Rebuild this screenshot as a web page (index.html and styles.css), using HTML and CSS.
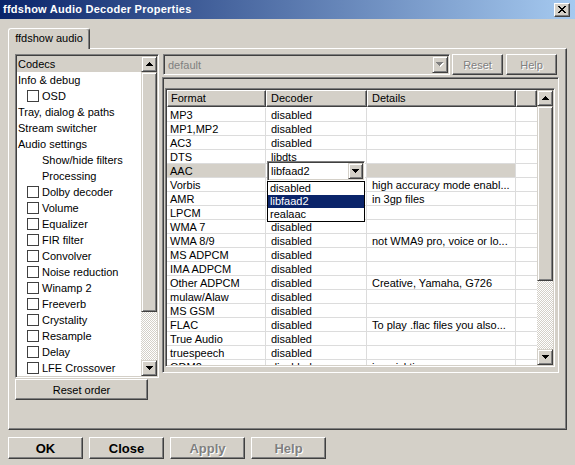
FILE: index.html
```html
<!DOCTYPE html>
<html>
<head>
<meta charset="utf-8">
<title>ffdshow Audio Decoder Properties</title>
<link rel="stylesheet" href="styles.css">
</head>
<body>
<div class="titlebar">
  <span class="title">ffdshow Audio Decoder Properties</span>
  <span class="tb-close"><svg width="8" height="7" viewBox="0 0 8 7"><path d="M0 0h2v1H0zM6 0h2v1H6zM1 1h2v1H1zM5 1h2v1H5zM2 2h4v1H2zM3 3h2v1H3zM2 4h4v1H2zM1 5h2v1H1zM5 5h2v1H5zM0 6h2v1H0zM6 6h2v1H6z" fill="#000"/></svg></span>
</div>
<div class="client">
  <div class="tabs"><div class="tab">ffdshow audio</div></div>
  <div class="panel">
    <div class="left">
      <div class="tree sunken">
        <ul class="items">
          <li class="sel">Codecs</li>
          <li>Info &amp; debug</li>
          <li class="cb"><span class="chk"></span>OSD</li>
          <li>Tray, dialog &amp; paths</li>
          <li>Stream switcher</li>
          <li>Audio settings</li>
          <li class="ind">Show/hide filters</li>
          <li class="ind">Processing</li>
          <li class="cb"><span class="chk"></span>Dolby decoder</li>
          <li class="cb"><span class="chk"></span>Volume</li>
          <li class="cb"><span class="chk"></span>Equalizer</li>
          <li class="cb"><span class="chk"></span>FIR filter</li>
          <li class="cb"><span class="chk"></span>Convolver</li>
          <li class="cb"><span class="chk"></span>Noise reduction</li>
          <li class="cb"><span class="chk"></span>Winamp 2</li>
          <li class="cb"><span class="chk"></span>Freeverb</li>
          <li class="cb"><span class="chk"></span>Crystality</li>
          <li class="cb"><span class="chk"></span>Resample</li>
          <li class="cb"><span class="chk"></span>Delay</li>
          <li class="cb"><span class="chk"></span>LFE Crossover</li>
        </ul>
        <div class="vscroll tree-sb">
          <div class="sb-btn"><svg width="7" height="4" viewBox="0 0 7 4"><path d="M3 0H4V1H5V2H6V3H7V4H0V3H1V2H2V1H3Z" fill="#000"/></svg></div>
          <div class="sb-thumb"></div>
          <div class="sb-track"></div>
          <div class="sb-btn"><svg width="7" height="4" viewBox="0 0 7 4"><path d="M0 0H7V1H6V2H5V3H4V4H3V3H2V2H1V1H0Z" fill="#000"/></svg></div>
        </div>
      </div>
      <div class="btn reset-order">Reset order</div>
    </div>
    <div class="right">
      <div class="toprow">
        <div class="combo-dis sunken">
          <span class="combo-text">default</span>
          <span class="combo-btn"><svg width="8" height="5" viewBox="0 0 8 5"><path d="M1 1H8V2H7V3H6V4H5V5H4V4H3V3H2V2H1Z" fill="#fff"/><path d="M0 0H7V1H6V2H5V3H4V4H3V3H2V2H1V1H0Z" fill="#808080"/></svg></span>
        </div>
        <div class="btn dis small reset">Reset</div>
        <div class="btn dis small help">Help</div>
      </div>
      <div class="frame">
        <div class="listview sunken">
          <div class="lv-main">
            <div class="lv-header">
              <div class="h h1">Format</div>
              <div class="h h2">Decoder</div>
              <div class="h h3">Details</div>
              <div class="h h4"></div>
            </div>
            <div class="lv-rows">
              <div class="row"><span class="c1">MP3</span><span class="c2">disabled</span><span class="c3"></span><span class="c4"></span></div>
              <div class="row"><span class="c1">MP1,MP2</span><span class="c2">disabled</span><span class="c3"></span><span class="c4"></span></div>
              <div class="row"><span class="c1">AC3</span><span class="c2">disabled</span><span class="c3"></span><span class="c4"></span></div>
              <div class="row"><span class="c1">DTS</span><span class="c2">libdts</span><span class="c3"></span><span class="c4"></span></div>
              <div class="row sel"><span class="c1">AAC</span><span class="c2"></span><span class="c3"></span><span class="c4"></span></div>
              <div class="row"><span class="c1">Vorbis</span><span class="c2"></span><span class="c3">high accuracy mode enabl...</span><span class="c4"></span></div>
              <div class="row"><span class="c1">AMR</span><span class="c2"></span><span class="c3">in 3gp files</span><span class="c4"></span></div>
              <div class="row"><span class="c1">LPCM</span><span class="c2"></span><span class="c3"></span><span class="c4"></span></div>
              <div class="row"><span class="c1">WMA 7</span><span class="c2">disabled</span><span class="c3"></span><span class="c4"></span></div>
              <div class="row"><span class="c1">WMA 8/9</span><span class="c2">disabled</span><span class="c3">not WMA9 pro, voice or lo...</span><span class="c4"></span></div>
              <div class="row"><span class="c1">MS ADPCM</span><span class="c2">disabled</span><span class="c3"></span><span class="c4"></span></div>
              <div class="row"><span class="c1">IMA ADPCM</span><span class="c2">disabled</span><span class="c3"></span><span class="c4"></span></div>
              <div class="row"><span class="c1">Other ADPCM</span><span class="c2">disabled</span><span class="c3">Creative, Yamaha, G726</span><span class="c4"></span></div>
              <div class="row"><span class="c1">mulaw/Alaw</span><span class="c2">disabled</span><span class="c3"></span><span class="c4"></span></div>
              <div class="row"><span class="c1">MS GSM</span><span class="c2">disabled</span><span class="c3"></span><span class="c4"></span></div>
              <div class="row"><span class="c1">FLAC</span><span class="c2">disabled</span><span class="c3">To play .flac files you also...</span><span class="c4"></span></div>
              <div class="row"><span class="c1">True Audio</span><span class="c2">disabled</span><span class="c3"></span><span class="c4"></span></div>
              <div class="row"><span class="c1">truespeech</span><span class="c2">disabled</span><span class="c3"></span><span class="c4"></span></div>
              <div class="row"><span class="c1">QDM2</span><span class="c2">disabled</span><span class="c3">in quicktime</span><span class="c4"></span></div>
            </div>
          </div>
          <div class="vscroll lv-sb">
            <div class="sb-btn"><svg width="7" height="4" viewBox="0 0 7 4"><path d="M3 0H4V1H5V2H6V3H7V4H0V3H1V2H2V1H3Z" fill="#000"/></svg></div>
            <div class="sb-thumb"></div>
            <div class="sb-track"></div>
            <div class="sb-btn"><svg width="7" height="4" viewBox="0 0 7 4"><path d="M0 0H7V1H6V2H5V3H4V4H3V3H2V2H1V1H0Z" fill="#000"/></svg></div>
          </div>
        </div>
        <div class="cell-combo sunken">
          <span class="cc-text">libfaad2</span>
          <span class="cc-btn"><svg width="7" height="4" viewBox="0 0 7 4"><path d="M0 0H7V1H6V2H5V3H4V4H3V3H2V2H1V1H0Z" fill="#000"/></svg></span>
        </div>
        <ul class="dropdown">
          <li>disabled</li>
          <li class="hl">libfaad2</li>
          <li>realaac</li>
        </ul>
      </div>
    </div>
  </div>
  <div class="buttons">
    <div class="btn big">OK</div>
    <div class="btn big">Close</div>
    <div class="btn big dis">Apply</div>
    <div class="btn big dis">Help</div>
  </div>
</div>
</body>
</html>
```

FILE: styles.css
```css
* { box-sizing: border-box; }
html, body { margin: 0; padding: 0; }
body {
  width: 575px;
  height: 465px;
  overflow: hidden;
  background: #d4d0c8;
  font-family: "Liberation Sans", Arial, sans-serif;
  font-size: 11px;
  color: #000;
}

/* title bar */
.titlebar {
  height: 19px;
  background: linear-gradient(to right, #0a246a, #a6caf0);
  display: flex;
  align-items: center;
  padding-left: 3px;
}
.title {
  flex: 1;
  color: #fff;
  font-weight: bold;
  letter-spacing: 0.25px;
  line-height: 19px;
}
.tb-close {
  width: 16px;
  height: 14px;
  margin-right: 5px;
  background: #d4d0c8;
  border: 1px solid;
  border-color: #fff #404040 #404040 #fff;
  box-shadow: inset -1px -1px #808080;
  display: flex;
  align-items: center;
  justify-content: center;
}
.tb-close svg { display: block; }

/* common 3d */
.sunken {
  border: 1px solid;
  border-color: #808080 #fff #fff #808080;
  box-shadow: inset 1px 1px #404040, inset -1px -1px #d4d0c8;
}
.btn {
  background: #d4d0c8;
  border: 1px solid;
  border-color: #fff #404040 #404040 #fff;
  box-shadow: inset -1px -1px #808080;
  display: flex;
  align-items: center;
  justify-content: center;
  white-space: nowrap;
}
.btn.dis { color: #808080; text-shadow: 1px 1px 0 #fff; }

/* tabs */
.client { padding: 9px 8px 0 8px; }
.tabs { display: flex; height: 20px; }
.tab {
  position: relative;
  z-index: 1;
  width: 82px;
  height: 21px;
  background: #d4d0c8;
  border-top: 1px solid #fff;
  border-left: 1px solid #fff;
  border-right: 1px solid #404040;
  border-radius: 3px 3px 0 0;
  box-shadow: inset -1px 0 #808080;
  display: flex;
  align-items: center;
  justify-content: center;
  padding-bottom: 1px;
  line-height: 13px;
}
.panel {
  width: 559px;
  height: 382px;
  border: 1px solid;
  border-color: #fff #404040 #404040 #fff;
  box-shadow: inset -1px -1px #808080;
  padding: 5px 0 0 6px;
  display: flex;
}

/* left tree */
.left { width: 144px; display: flex; flex-direction: column; }
.tree {
  height: 324px;
  background: #fff;
  display: flex;
  padding: 1px;
}
.items {
  flex: 1;
  list-style: none;
  margin: 0;
  padding: 0;
}
.items li {
  height: 16px;
  line-height: 16px;
  padding-left: 1px;
  white-space: nowrap;
  display: flex;
  align-items: center;
}
.items li.sel { background: #d4d0c8; }
.items li.cb { padding-left: 10px; }
.items li.ind { padding-left: 25px; }
.chk {
  width: 12px;
  height: 12px;
  border: 1px solid #404040;
  background: #fff;
  margin-right: 3px;
  flex: none;
}

/* scrollbars */
.vscroll { width: 16px; display: flex; flex-direction: column; flex: none; }
.sb-btn, .sb-thumb {
  background: #d4d0c8;
  border: 1px solid;
  border-color: #d4d0c8 #404040 #404040 #d4d0c8;
  box-shadow: inset 1px 1px #fff, inset -1px -1px #808080;
}
.sb-btn {
  height: 16px;
  display: flex;
  align-items: center;
  justify-content: center;
  flex: none;
}
.sb-btn svg { display: block; }
.sb-track {
  background: repeating-conic-gradient(#d4d0c8 0 25%, #fff 0 50%) 0 0 / 2px 2px;
}
.tree-sb .sb-thumb { height: 240px; }
.tree-sb .sb-track { height: 48px; }
.lv-sb .sb-thumb { height: 175px; }
.lv-sb .sb-track { height: 68px; }

.reset-order {
  width: 133px;
  height: 21px;
  margin-top: 1px;
}

/* right side */
.right { margin-left: 3px; width: 397px; }
.toprow { display: flex; height: 21px; margin-left: 1px; }
.combo-dis {
  width: 287px;
  height: 21px;
  background: #d4d0c8;
  display: flex;
  align-items: center;
  padding: 1px 1px 1px 4px;
}
.combo-text { flex: 1; color: #808080; }
.combo-btn {
  width: 16px;
  height: 17px;
  background: #d4d0c8;
  border: 1px solid;
  border-color: #d4d0c8 #404040 #404040 #d4d0c8;
  box-shadow: inset 1px 1px #fff, inset -1px -1px #808080;
  display: flex;
  align-items: center;
  justify-content: center;
}
.combo-btn svg { display: block; }
.small { width: 51px; height: 21px; }
.reset { margin-left: 2px; }
.help { margin-left: 3px; }

.frame {
  position: relative;
  margin-top: 2px;
  width: 397px;
  height: 296px;
  border: 1px solid;
  border-color: #808080 #fff #fff #808080;
  box-shadow: inset 1px 1px #404040, inset -1px -1px #d4d0c8;
  padding: 10px 0 0 2px;
}
.listview {
  width: 390px;
  height: 279px;
  background: #fff;
  display: flex;
  padding: 1px;
}
.lv-main { width: 370px; overflow: hidden; }
.lv-header { display: flex; height: 18px; }
.h {
  height: 17px;
  line-height: 15px;
  background: #d4d0c8;
  border: 1px solid;
  border-color: #fff #404040 #404040 #fff;
  box-shadow: inset -1px -1px #808080;
  padding-left: 4px;
  white-space: nowrap;
}
.h1 { width: 99px; padding-left: 3px; }
.h2 { width: 101px; }
.h3 { width: 149px; }
.h4 { flex: 1; }

.row {
  display: flex;
  height: 14px;
  line-height: 14px;
}
.row span {
  height: 14px;
  border-right: 1px solid #dcdcdc;
  border-bottom: 1px solid #dcdcdc;
  white-space: nowrap;
  overflow: hidden;
}
.row .c1 { width: 99px; padding-left: 3px; }
.row .c2 { width: 101px; padding-left: 5px; }
.row .c3 { width: 149px; padding-left: 5px; }
.row .c4 { flex: 1; border-right: none; }
.row.sel .c1, .row.sel .c3 { background: #d4d0c8; }

/* in-cell combo and open dropdown (overlays) */
.cell-combo {
  position: absolute;
  left: 104px;
  top: 83px;
  width: 98px;
  height: 20px;
  background: #fff;
  display: flex;
  align-items: center;
  padding: 1px 1px 1px 3px;
}
.cc-text { flex: 1; line-height: 13px; }
.cc-btn {
  width: 15px;
  height: 16px;
  background: #d4d0c8;
  border: 1px solid;
  border-color: #d4d0c8 #404040 #404040 #d4d0c8;
  box-shadow: inset 1px 1px #fff, inset -1px -1px #808080;
  display: flex;
  align-items: center;
  justify-content: center;
}
.cc-btn svg { display: block; }
.dropdown {
  position: absolute;
  left: 104px;
  top: 103px;
  width: 98px;
  margin: 0;
  padding: 0;
  list-style: none;
  background: #fff;
  border: 1px solid #000;
}
.dropdown li {
  height: 13px;
  line-height: 13px;
  padding-left: 2px;
}
.dropdown li.hl { background: #0a246a; color: #fff; }

/* bottom buttons */
.buttons { display: flex; gap: 6px; margin-top: 7px; }
.big {
  width: 75px;
  height: 22px;
  font-size: 13px;
  font-weight: bold;
}
```
